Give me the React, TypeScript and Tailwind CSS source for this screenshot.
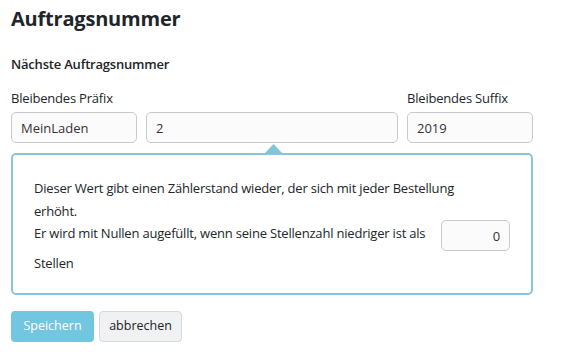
export default function App() {
  const inputCls =
    "h-[31px] rounded-[5px] border border-[#c6cacf] bg-[#fbfbfb] px-[9px] text-[13px] text-[#333] outline-none";

  return (
    <div className="min-h-[352px] w-[567px] bg-white px-[11px] pt-[5px] text-[#212529] [font-family:'Open_Sans',sans-serif]">
      <h1 className="text-[20px] font-bold leading-[28px] tracking-[-0.2px]">Auftragsnummer</h1>

      <h2 className="mt-[22px] text-[13px] font-semibold leading-[18px] tracking-[-0.2px]">Nächste Auftragsnummer</h2>

      <div className="mt-[16px] flex gap-[9px]">
        <div className="flex w-[126px] flex-col">
          <label className="text-[13px] leading-[18px] tracking-[-0.2px]">Bleibendes Präfix</label>
          <input className={`${inputCls} mt-[5px] w-full`} defaultValue="MeinLaden" />
        </div>
        <div className="flex w-[252px] flex-col justify-end">
          <input className={`${inputCls} w-full`} defaultValue="2" />
        </div>
        <div className="flex w-[126px] flex-col">
          <label className="text-[13px] leading-[18px] tracking-[-0.2px]">Bleibendes Suffix</label>
          <input className={`${inputCls} mt-[5px] w-full`} defaultValue="2019" />
        </div>
      </div>

      <div className="relative mt-[10px] w-[522px] rounded-[5px] border-2 border-[#86c6da] px-[21px] pb-[18px] pt-[22px] text-[13px] leading-[22.5px] tracking-[-0.2px]">
        <svg className="absolute left-[251px] top-[-11px]" width="19" height="10" viewBox="0 0 19 10">
          <path d="M0 10 L9.5 0 L19 10 Z" fill="#7fc6da" />
        </svg>
        <div>Dieser Wert gibt einen Zählerstand wieder, der sich mit jeder Bestellung</div>
        <div>erhöht.</div>
        <div className="flex items-start">
          <span>Er wird mit Nullen augefüllt, wenn seine Stellenzahl niedriger ist als</span>
          <input
            className="ml-auto mt-[-2px] h-[31px] w-[69px] rounded-[5px] border border-[#c6cacf] bg-[#fbfbfb] px-[9px] text-right text-[13px] text-[#333] outline-none"
            defaultValue="0"
          />
        </div>
        <div className="mt-[1px]">Stellen</div>
      </div>

      <div className="mt-[16px] flex gap-[5px]">
        <button className="h-[31px] w-[83px] rounded-[4px] bg-[#72c6df] text-[12.5px] text-white">Speichern</button>
        <button className="h-[31px] w-[83px] rounded-[4px] border border-[#d6d9dd] bg-[#eff1f3] text-[12.5px] text-[#222]">
          abbrechen
        </button>
      </div>
    </div>
  );
}
